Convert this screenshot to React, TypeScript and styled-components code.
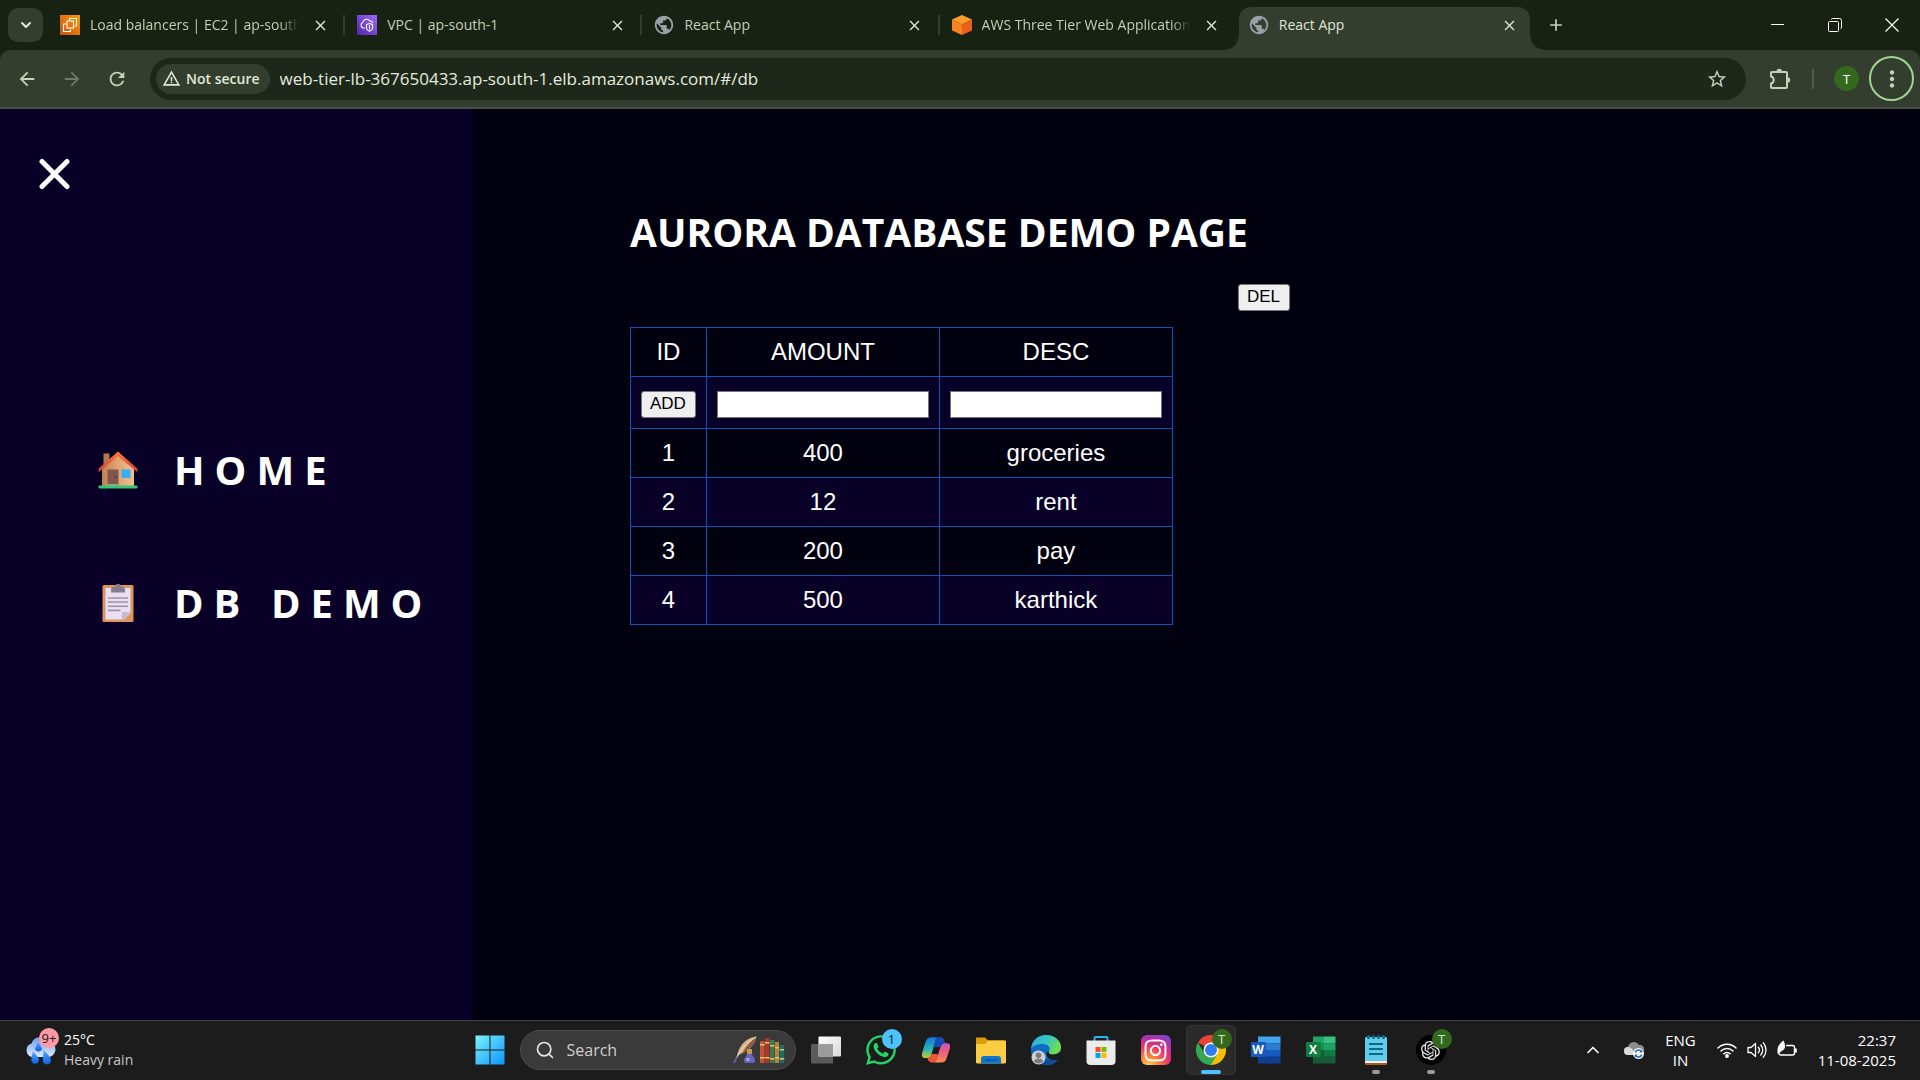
import React from "react";
import styled, { createGlobalStyle, css } from "styled-components";
import {
  MdAdd,
  MdArrowBack,
  MdArrowForward,
  MdClose,
  MdMoreVert,
  MdPublic,
  MdRefresh,
  MdStarBorder,
  MdWarningAmber,
} from "react-icons/md";
import { FaInstagram, FaWhatsapp } from "react-icons/fa";
import { RiOpenaiFill } from "react-icons/ri";
import { ChevronDown, ChevronUp, Search } from "lucide-react";

const uiFont = `"Segoe UI", "Open Sans", "Noto Sans", sans-serif`;
const tableFont = `Arial, "Liberation Sans", sans-serif`;

const c = {
  strip: "#182213",
  toolbar: "#333e2e",
  omnibox: "#1e281a",
  tabText: "#c2ceb8",
  activeText: "#dfe6d8",
  icon: "#c4d3b8",
  sidebar: "#080026",
  page: "#01010f",
  line: "#0a53b9",
  taskbar: "#1c1c1c",
};

const GlobalStyle = createGlobalStyle`
  *, *::before, *::after { box-sizing: border-box; }
  body { margin: 0; background: ${c.page}; font-family: ${uiFont}; }
  button, input { font: inherit; }
  svg { display: block; flex: none; }
`;

const Screen = styled.div`
  display: flex;
  flex-direction: column;
  min-height: 100vh;
`;

/* ---------- browser chrome ---------- */

const BrowserFrame = styled.header`
  background: ${c.strip};
`;

const TabStrip = styled.div`
  display: flex;
  align-items: stretch;
  height: 50px;
  padding-left: 8px;
`;

const PlainButton = styled.button`
  display: flex;
  align-items: center;
  justify-content: center;
  padding: 0;
  border: 0;
  background: none;
  color: ${c.icon};
`;

const TabSearch = styled(PlainButton)`
  width: 35px;
  height: 34px;
  margin: 8px 5px 0 0;
  border-radius: 10px;
  background: ${c.toolbar};
  color: #e4ebdd;
`;

const Tabs = styled.nav`
  display: flex;
  flex: 0 1 1488px;
  min-width: 0;
`;

const Tab = styled.div<{ $active?: boolean; $divider?: boolean }>`
  position: relative;
  display: flex;
  flex: 1 1 0;
  align-items: center;
  min-width: 0;
  padding: 0 14px 0 12px;
  color: ${(p) => (p.$active ? c.activeText : c.tabText)};

  ${(p) =>
    p.$divider &&
    css`
      &::after {
        content: "";
        position: absolute;
        top: 15px;
        right: 0;
        width: 2px;
        height: 20px;
        background: #333e2e;
      }
    `}

  ${(p) =>
    p.$active &&
    css`
      margin: 7px 6px 0 2px;
      padding: 0 10px 7px 10px;
      border-radius: 12px 12px 0 0;
      background: ${c.toolbar};

      &::before,
      &::after {
        content: "";
        position: absolute;
        bottom: 0;
        width: 14px;
        height: 14px;
      }
      &::before {
        left: -14px;
        background: radial-gradient(circle at 0 0, transparent 13px, ${c.toolbar} 14px);
      }
      &::after {
        right: -14px;
        background: radial-gradient(circle at 100% 0, transparent 13px, ${c.toolbar} 14px);
      }
    `}
`;

const TabTitle = styled.a<{ $fade?: boolean }>`
  flex: 1;
  min-width: 0;
  margin: 0 10px;
  overflow: hidden;
  color: inherit;
  font-size: 14px;
  line-height: 22px;
  text-decoration: none;
  white-space: nowrap;
  ${(p) => p.$fade && css`mask-image: linear-gradient(90deg, #000 calc(100% - 20px), transparent);`}
`;

const TabClose = styled(PlainButton)`
  width: 22px;
  height: 22px;
  color: #dde5d5;
`;

const NewTab = styled(PlainButton)`
  width: 40px;
`;

const WindowControls = styled.div`
  display: flex;
  margin-left: auto;
`;

const WindowButton = styled(PlainButton)`
  width: 57px;
  color: #ffffff;
`;

const Toolbar = styled.div`
  display: flex;
  align-items: center;
  height: 59px;
  padding: 0 6px 0 4px;
  border-bottom: 2px solid #454f41;
  border-radius: 10px 10px 0 0;
  background: ${c.toolbar};
`;

const ToolButton = styled(PlainButton)<{ $dim?: boolean }>`
  width: 45px;
  height: 40px;
  color: ${(p) => (p.$dim ? "#6f7b69" : c.icon)};
`;

const Omnibox = styled.div`
  display: flex;
  flex: 1;
  align-items: center;
  height: 42px;
  margin: 0 11px;
  padding: 0 18px 0 6px;
  border-radius: 21px;
  background: ${c.omnibox};
`;

const Chip = styled.button`
  display: flex;
  align-items: center;
  gap: 5px;
  height: 30px;
  padding: 0 10px 0 6px;
  border: 0;
  border-radius: 15px;
  background: ${c.toolbar};
  color: #e0e8d8;
  font-size: 14px;
  font-weight: 600;
  line-height: 20px;
  white-space: nowrap;
`;

const UrlInput = styled.input`
  flex: 1;
  min-width: 0;
  margin-left: 10px;
  padding: 0;
  border: 0;
  outline: 0;
  background: none;
  color: #e4ebde;
  font-size: 17px;
  line-height: 24px;
`;

const ToolbarEnd = styled.div`
  display: flex;
  align-items: center;
`;

const Divider = styled.span`
  width: 2px;
  height: 20px;
  margin: 0 20px 0 10px;
  background: #4c5b43;
`;

const Avatar = styled.button`
  width: 25px;
  height: 25px;
  padding: 0;
  border: 0;
  border-radius: 50%;
  background: #33691e;
  color: #ffffff;
  font-size: 13px;
  line-height: 24px;
`;

const MenuButton = styled(PlainButton)`
  width: 45px;
  height: 45px;
  margin-left: 10px;
  border: 2px solid #a2d68f;
  border-radius: 50%;
`;

/* ---------- page ---------- */

const Page = styled.main`
  display: flex;
  flex: 1;
  background: ${c.page};
`;

const Sidebar = styled.aside`
  flex: 0 0 472px;
  padding-top: 49px;
  background: ${c.sidebar};
`;

const CloseMenu = styled(PlainButton)`
  width: 32px;
  height: 32px;
  margin-left: 38px;
`;

const Menu = styled.nav`
  display: flex;
  flex-direction: column;
  gap: 79px;
  margin-top: 253px;
  padding-left: 98px;
`;

const MenuLink = styled.a`
  display: flex;
  align-items: center;
  gap: 36px;
  color: #ffffff;
  font-size: 40px;
  font-weight: 700;
  line-height: 54px;
  letter-spacing: 10px;
  text-decoration: none;
  white-space: nowrap;
`;

const Content = styled.section`
  display: flex;
  flex-direction: column;
  align-items: flex-start;
  padding: 96px 0 0 158px;
`;

const Heading = styled.h1`
  margin: 0;
  color: #ffffff;
  font-size: 39px;
  font-weight: 700;
  line-height: 54px;
  white-space: nowrap;
`;

const Actions = styled.div`
  display: flex;
  justify-content: flex-end;
  width: 660px;
  margin: 25px 0 16px;
`;

const FormButton = styled.button`
  height: 27px;
  padding: 0 9px 2px 8px;
  border: 1px solid #767676;
  border-radius: 3px;
  background: #efefef;
  color: #000000;
  font-family: ${tableFont};
  font-size: 17px;
  line-height: 20px;
`;

const Table = styled.table`
  border-collapse: collapse;
  color: #ffffff;
  font-family: ${tableFont};
  font-size: 24px;
  line-height: 28px;
  text-align: center;

  tr:nth-child(even) {
    background: ${c.sidebar};
  }
  th,
  td {
    padding: 10px;
    border: 1px solid ${c.line};
    font-weight: 400;
  }
`;

const EntryRow = styled.tr`
  && td {
    padding-top: 14px;
    line-height: 0;
  }
`;

const EntryInput = styled.input`
  width: 212px;
  height: 27px;
  padding: 1px 2px;
  border: 1px solid #767676;
  background: #ffffff;
  font-size: 17px;
`;

/* ---------- taskbar ---------- */

const Taskbar = styled.footer`
  display: flex;
  align-items: center;
  height: 60px;
  padding-bottom: 1px;
  border-top: 1px solid #434343;
  background: ${c.taskbar};
  color: #ffffff;
`;

const Side = styled.div<{ $end?: boolean }>`
  display: flex;
  flex: 1 1 0;
  align-items: center;
  justify-content: ${(p) => (p.$end ? "flex-end" : "flex-start")};
  padding: ${(p) => (p.$end ? "0 24px 0 0" : "0 0 0 24px")};
`;

const Weather = styled.button`
  display: flex;
  align-items: center;
  gap: 8px;
  padding: 0;
  border: 0;
  background: none;
  color: #ffffff;
  font-size: 14px;
  line-height: 20px;
  text-align: left;
`;

const WeatherIcon = styled.span`
  position: relative;
  width: 32px;
  height: 32px;
`;

const Badge = styled.span<{ $bg: string; $fg: string }>`
  position: absolute;
  top: -6px;
  right: -6px;
  width: 20px;
  height: 20px;
  border-radius: 50%;
  background: ${(p) => p.$bg};
  color: ${(p) => p.$fg};
  font-size: 13px;
  line-height: 20px;
  text-align: center;
`;

const WeatherBadge = styled(Badge)`
  right: -3px;
`;

const Muted = styled.span`
  color: #c8c8c8;
`;

const Stack = styled.span<{ $align?: string }>`
  display: flex;
  flex-direction: column;
  text-align: ${(p) => p.$align || "left"};
`;

const Dock = styled.div`
  display: flex;
  flex: none;
  align-items: center;
  gap: 5px;
`;

const Tile = styled.button<{ $on?: boolean }>`
  position: relative;
  display: flex;
  align-items: center;
  justify-content: center;
  width: 50px;
  height: 50px;
  padding: 0;
  border: 1px solid ${(p) => (p.$on ? "#353535" : "transparent")};
  border-radius: 5px;
  background: ${(p) => (p.$on ? "#2a2a2a" : "none")};
`;

const TileIcon = styled.span`
  position: relative;
  display: block;
  width: 30px;
  height: 30px;
`;

const Running = styled.span<{ $focus?: boolean }>`
  position: absolute;
  bottom: 0;
  width: ${(p) => (p.$focus ? 20 : 8)}px;
  height: 4px;
  border-radius: 2px;
  background: ${(p) => (p.$focus ? "#4cc2ff" : "#9a9a9a")};
`;

const SearchBox = styled.label`
  display: flex;
  align-items: center;
  width: 276px;
  height: 40px;
  padding: 0 10px 0 14px;
  border: 1px solid #4c4c4c;
  border-radius: 20px;
  background: #3a3a3a;
`;

const SearchInput = styled.input`
  flex: 1;
  min-width: 0;
  margin-left: 12px;
  padding: 0;
  border: 0;
  outline: 0;
  background: none;
  color: #cfcfcf;
  font-size: 16px;
  line-height: 22px;
  &::placeholder {
    color: #cfcfcf;
    opacity: 1;
  }
`;

const TrayButton = styled.button`
  display: flex;
  align-items: center;
  gap: 10px;
  padding: 0;
  border: 0;
  background: none;
  color: #ffffff;
  font-size: 15px;
  line-height: 20px;
  white-space: nowrap;
`;

const Tray = styled.div`
  display: flex;
  align-items: center;
  gap: 21px;
`;

/* ---------- drawings ---------- */

const Ec2Icon = () => (
  <svg width="20" height="20" viewBox="0 0 20 20">
    <defs>
      <linearGradient id="ec2" x1="0" y1="1" x2="1" y2="0">
        <stop offset="0" stopColor="#c8511b" />
        <stop offset="1" stopColor="#ff9900" />
      </linearGradient>
    </defs>
    <rect width="20" height="20" fill="url(#ec2)" />
    <g fill="none" stroke="#fff" strokeWidth="1.1" strokeLinejoin="round">
      <path d="M9.500 5.500V3.500h7V11h-2" />
      <rect x="7" y="6" width="6.500" height="7" />
      <path d="M6 9H3.500v7.500h7V14.500" />
    </g>
  </svg>
);

const VpcIcon = () => (
  <svg width="20" height="20" viewBox="0 0 20 20">
    <defs>
      <linearGradient id="vpc" x1="0" y1="1" x2="1" y2="0">
        <stop offset="0" stopColor="#4d27a8" />
        <stop offset="1" stopColor="#a166ff" />
      </linearGradient>
    </defs>
    <rect width="20" height="20" fill="url(#vpc)" />
    <g fill="none" stroke="#fff" strokeWidth="1.1">
      <path d="M8 13H6a3 3 0 0 1-.3-5.500A4 4 0 0 1 13 6.200a2.400 2.400 0 0 1 2.800 1.600" />
      <path d="M9.500 9.500 12.500 8.500l3 1v3.500c0 1.600-1.500 2.500-3 3.200-1.500-.7-3-1.600-3-3.200z" />
      <path d="M12.500 10v4.500" />
    </g>
  </svg>
);

const CubeIcon = () => (
  <svg width="20" height="20" viewBox="0 0 20 20">
    <path d="M10 0 20 4.500 10 9.500 0 4.500z" fill="#ff9d2e" />
    <path d="M0 4.500 10 9.500V20L0 15.500z" fill="#f58320" />
    <path d="M20 4.500 10 9.500V20l10-4.500z" fill="#ea5f1c" />
  </svg>
);

const PuzzleIcon = () => (
  <svg width="24" height="24" viewBox="0 0 24 24">
    <path
      d="M4 5h14a1 1 0 0 1 1 1v14a1 1 0 0 1-1 1H4a1 1 0 0 1-1-1v-3.500c1.600-.3 2.700-1.600 2.700-3.500S4.600 9.800 3 9.500V6a1 1 0 0 1 1-1z"
      fill="none"
      stroke="currentColor"
      strokeWidth="2"
      strokeLinejoin="round"
    />
    <path d="M8.500 4.500a2.700 2.700 0 0 1 5.400 0zM19.500 10.300a2.700 2.700 0 0 1 0 5.400z" fill="currentColor" />
  </svg>
);

const HouseIcon = () => (
  <svg width="40" height="40" viewBox="0 0 40 40">
    <defs>
      <linearGradient id="wall" x1="0" x2="1">
        <stop offset="0" stopColor="#b9834f" />
        <stop offset=".5" stopColor="#e0a574" />
        <stop offset="1" stopColor="#ecc08e" />
      </linearGradient>
      <linearGradient id="roof" x1="0" y1="1" x2="0" y2="0">
        <stop offset="0" stopColor="#d83a35" />
        <stop offset="1" stopColor="#ff7a3c" />
      </linearGradient>
    </defs>
    <path d="M5.500 3.500h6V14h-6z" fill="#b07a48" />
    <path d="M4 18 20 4l16 14v18H4z" fill="url(#wall)" />
    <path d="m20 1.500 19.500 17.200v3.600L20 6.200.5 22.300v-3.600z" fill="url(#roof)" />
    <path d="M9.500 20.500a1 1 0 0 1 1-1h9a1 1 0 0 1 1 1V36h-11z" fill="#83554f" />
    <circle cx="17.600" cy="27" r=".9" fill="#5b3633" />
    <rect x="23.500" y="19.500" width="9" height="8.500" rx=".8" fill="#35aef5" />
    <rect x="8.500" y="34" width="13" height="2" fill="#a3a08f" />
    <rect x=".5" y="35.500" width="39" height="3" rx="1" fill="#35c973" />
  </svg>
);

const ClipboardIcon = () => (
  <svg width="40" height="40" viewBox="0 0 40 40">
    <rect x="4.500" y="2" width="31" height="37" rx="1.500" fill="#dc9560" />
    <path d="M7.500 5h25v25l-6.500 6.500H7.500z" fill="#e8e0f2" />
    <path d="M32.500 29H24v7.500h1.500z" fill="#c3b8d4" />
    <path d="M13 9.500V6.500c0-2 2-3 4.500-3.200C17.800 1.500 18.700.8 20 .8s2.200.7 2.500 2.500C25 3.500 27 4.500 27 6.500v3z" fill="#857e8c" />
    <g stroke="#9b93a6" strokeWidth="1.600">
      <path d="M10 15h20M10 19h20M10 23.200h20M10 27.400h12.500" />
    </g>
  </svg>
);

const CrossIcon = () => (
  <svg width="32" height="32" viewBox="0 0 32 32" stroke="#fff" strokeWidth="5" strokeLinecap="round">
    <path d="M4 3.500l25 25M29 3.500l-25 25" />
  </svg>
);

const RainIcon = () => (
  <svg width="32" height="32" viewBox="0 0 32 32">
    <defs>
      <linearGradient id="cloud" x1="0" y1="0" x2="0" y2="1">
        <stop offset="0" stopColor="#6f9df0" />
        <stop offset="1" stopColor="#dfe9fb" />
      </linearGradient>
      <linearGradient id="drop" x1="0" y1="0" x2="0" y2="1">
        <stop offset="0" stopColor="#56a8ff" />
        <stop offset="1" stopColor="#0a5fe8" />
      </linearGradient>
    </defs>
    <path d="M8 23a7 7 0 0 1-.5-13.500A9 9 0 0 1 24 8a7.500 7.500 0 0 1 0 15z" fill="url(#cloud)" />
    <g fill="url(#drop)">
      <path d="M14 8c2 3 4 5 4 7.500a4 4 0 0 1-7 0C11 13 13 11 14 8z" />
      <path d="M9 17.500c3 3.500 6 5.500 6 9a4 4 0 0 1-7.500 1C7 24 8 21 9 17.500z" />
      <path d="M20 16.500c3.500 3.500 7 6.500 7 10a4.200 4.200 0 0 1-8 1.500c-.5-4 0-8 1-11.500z" />
    </g>
  </svg>
);

const WindowsIcon = () => (
  <svg width="30" height="30" viewBox="0 0 30 30">
    <defs>
      <linearGradient id="win" x1="0" y1="0" x2="30" y2="30" gradientUnits="userSpaceOnUse">
        <stop offset="0" stopColor="#7df3fc" />
        <stop offset="1" stopColor="#0a94fb" />
      </linearGradient>
    </defs>
    <path d="M.5.5h14v14H.5zM15.500.5h14v14h-14zM.5 15.500h14v14H.5zM15.500 15.500h14v14h-14z" fill="url(#win)" />
  </svg>
);

const QuillBooks = () => (
  <svg width="52" height="30" viewBox="0 0 52 30">
    <path d="M4 22C5 13 11 3 23.500 1.500 22 10 14 17 7 19z" fill="#d9b18c" />
    <path d="M9 19c6-3 12-9 14.500-17.500C18 6 12 12 9 19z" fill="#8a5c42" />
    <path d="M3 24C7 15 14 7 23 2" fill="none" stroke="#f3e2cc" strokeWidth="1" />
    <path d="m1 28 3-6" stroke="#5d6bd0" strokeWidth="1.600" />
    <rect x="14" y="14" width="5" height="5" fill="#c79556" />
    <path d="M13.500 19h6v2c2 1 2.500 3 2.500 5a2 2 0 0 1-2 2h-7a2 2 0 0 1-2-2c0-2 .5-4 2.500-5z" fill="#6666b8" />
    <path d="M13.500 23h3v3h-3z" fill="#a9a9ea" />
    <rect x="27" y="6" width="4.500" height="22" fill="#c4532f" />
    <rect x="32" y="3" width="4.500" height="25" fill="#a8372e" />
    <rect x="37" y="5" width="4.500" height="23" fill="#3c7a4e" />
    <rect x="42" y="7" width="4" height="21" fill="#b5823b" />
    <rect x="46.600" y="10" width="4.500" height="18" fill="#197066" />
    <g fill="#e9c268">
      <path d="M27 9h4.500v1.500H27zM27 22h4.500v1.500H27zM32 7h4.500v1.500H32zM32 22h4.500v1.500H32zM37 10h4.500v1.500H37zM37 23h4.500v1.500H37zM42 12h4v1.500h-4zM42 22h4v1.500h-4zM46.600 14h4.500v1.500h-4.500zM46.600 23h4.500v1.500h-4.500z" />
    </g>
  </svg>
);

const TaskViewIcon = () => (
  <svg width="30" height="30" viewBox="0 0 30 30">
    <defs>
      <linearGradient id="tv" x1="0" y1="0" x2="1" y2="1">
        <stop offset="0" stopColor="#fff" />
        <stop offset="1" stopColor="#d8d8d8" />
      </linearGradient>
    </defs>
    <rect y="9" width="22" height="19.500" rx="1" fill="#5b5b5b" />
    <rect x="7.500" y="1.500" width="22.500" height="20" rx="1" fill="url(#tv)" />
    <path d="M7.500 9H22v12.500H7.500z" fill="#9c9c9c" />
  </svg>
);

const CopilotIcon = () => (
  <svg width="30" height="30" viewBox="0 0 30 30">
    <defs>
      <linearGradient id="cpa" x1="0" y1="0" x2="0" y2="1">
        <stop offset="0" stopColor="#0c77e0" />
        <stop offset=".5" stopColor="#2fb6b0" />
        <stop offset=".8" stopColor="#b9c93b" />
        <stop offset="1" stopColor="#f7b70c" />
      </linearGradient>
      <linearGradient id="cpb" x1="0" y1="0" x2="0" y2="1">
        <stop offset="0" stopColor="#a55cf0" />
        <stop offset=".5" stopColor="#e8568f" />
        <stop offset="1" stopColor="#ff8b4b" />
      </linearGradient>
    </defs>
    <path d="M11 27c-2.500 0-3.500-1.500-4.200-4H3.500C1 23 .5 20 1.200 17.500L4.500 7C5.500 3.800 7.500 2.200 10 2.200h9c-3 0-4 2-5 5L10.500 19c-.7 2.500-2 4-4 4" fill="url(#cpa)" />
    <path d="M19 2.200c2.500 0 3.500 1.500 4.200 4l.6 2h2.700c2.500 0 3 3 2.300 5.500l-3.300 9.800c-1 3-3 4-5.500 4h-9c3 0 4-2 5-5L19.500 12c.7-2.500 2-3.800 4-3.800" fill="url(#cpb)" />
    <path d="M14.500 2.200H19c2.500 0 3.500 1.500 4.200 4l.6 2c-2.500 0-3.700 1-4.300 3.800H12.800L14 7.200c1-3 .8-4 .5-5z" fill="#1648b8" />
    <path d="M6.500 23c2 0 3.300-1.500 4-4h6.200l-.7 3.500c-1 3-2 5-5 5-2.500 0-3.800-2-4.500-4.500z" fill="#f2553a" />
  </svg>
);

const FolderIcon = () => (
  <svg width="30" height="30" viewBox="0 0 30 30">
    <path d="M0 3.500a1 1 0 0 1 1-1h8l3 3h16a2 2 0 0 1 2 2V14H0z" fill="#dd9d08" />
    <path d="M0 9h9l3-3.500h17a1 1 0 0 1 1 1V27a1.500 1.500 0 0 1-1.500 1.500h-27A1.500 1.500 0 0 1 0 27z" fill="#fccd43" />
    <path d="M5 28.500V24a3 3 0 0 1 3-3h14a3 3 0 0 1 3 3v4.500z" fill="#0f76cd" />
    <path d="M9 25h12" stroke="#0a4a8c" strokeWidth="1.200" />
  </svg>
);

const EdgeIcon = () => (
  <svg width="30" height="30" viewBox="0 0 30 30">
    <defs>
      <linearGradient id="ed" x1="0" y1="0" x2="1" y2=".5">
        <stop offset="0" stopColor="#2aa7dd" />
        <stop offset=".55" stopColor="#36c6c0" />
        <stop offset="1" stopColor="#6fe04b" />
      </linearGradient>
    </defs>
    <circle cx="15" cy="15" r="15" fill="#0f6cc4" />
    <path d="M0 14C1 5 7 0 15 0c9 0 15 6 15 12 0 5-4 7.500-8 7.500-3 0-5-1-4-3 2-4-1-7.500-6-7.500C6 9 1 11 0 14z" fill="url(#ed)" />
    <path d="M12 15c-2 8 5 12 15.500 9.500C24 29 19 31 13 30 7 27 7 17 12 15z" fill="#0b4da0" />
    <path d="M18 16.500c-1 2 1 3 4 3 3 0 6-1 7.500-3.500 1 3 0 6-2 8.500-7 2-13-1-12-7.500z" fill="#1c1c1c" />
    <circle cx="7.500" cy="22.500" r="7" fill="#cfcfcf" />
    <circle cx="7.500" cy="20.300" r="2.800" fill="#7c7c7c" />
    <path d="M3 26.500c0-4 9-4 9 0-2 2.500-7 2.500-9 0z" fill="#7c7c7c" />
  </svg>
);

const StoreIcon = () => (
  <svg width="30" height="30" viewBox="0 0 30 30">
    <path d="M8.500 6V3a1 1 0 0 1 1-1h11a1 1 0 0 1 1 1v3" fill="none" stroke="#2ab4ea" strokeWidth="2" />
    <path d="M.5 5.500h29V26a4 4 0 0 1-4 4h-21a4 4 0 0 1-4-4z" fill="#ebebeb" />
    <path d="M9.500 12h5v5h-5z" fill="#f25022" />
    <path d="M15.500 12h5v5h-5z" fill="#7fba00" />
    <path d="M9.500 18h5v5h-5z" fill="#00a4ef" />
    <path d="M15.500 18h5v5h-5z" fill="#ffb900" />
  </svg>
);

const InstaTile = styled.span`
  display: flex;
  align-items: center;
  justify-content: center;
  width: 30px;
  height: 30px;
  border-radius: 6px;
  background: radial-gradient(circle at 25% 105%, #ffd35a 0, #fb8a3a 25%, #e8306e 55%, #b42fae 75%, #5a55d6 100%);
  color: #ffffff;
`;

const WhatsAppTile = styled.span`
  display: flex;
  align-items: center;
  justify-content: center;
  width: 30px;
  height: 30px;
  color: #25d366;
`;

const ChromeIcon = () => (
  <svg width="30" height="30" viewBox="0 0 30 30">
    <path d="M15 15 2 7.500A15 15 0 0 1 28 7.500H15z" fill="#ea4335" />
    <path d="M15 15 15 7.500h13A15 15 0 0 1 15 30z" fill="#fbbc05" />
    <path d="M15 15 21.500 18.800 15 30A15 15 0 0 1 2 7.500l6.500 11.200z" fill="#34a853" />
    <circle cx="15" cy="15" r="7.500" fill="#fff" />
    <circle cx="15" cy="15" r="6" fill="#2f7df0" />
  </svg>
);

const Letter = styled.span<{ $bg: string }>`
  position: absolute;
  top: 7px;
  left: 0;
  width: 15px;
  height: 15px;
  border-radius: 1px;
  background: ${(p) => p.$bg};
  color: #ffffff;
  font-size: 12px;
  font-weight: 700;
  line-height: 15px;
  text-align: center;
`;

const OfficeSheet = ({ shades }: { shades: string[] }) => (
  <svg width="30" height="30" viewBox="0 0 30 30">
    {shades.map((s, i) => (
      <rect key={s} x="7" y={1.5 + i * 6.75} width="22.500" height="6.800" fill={s} />
    ))}
  </svg>
);

const ExcelSheet = () => (
  <svg width="30" height="30" viewBox="0 0 30 30">
    <path d="M7 1.500h11v9H7z" fill="#21a366" />
    <path d="M18 1.500h11.500v6.800H18z" fill="#33c481" />
    <path d="M18 8.300h11.500v6.800H18z" fill="#21a366" />
    <path d="M7 8.300h11v6.800H7z" fill="#149052" />
    <path d="M7 15h11v13.500H7z" fill="#185c37" />
    <path d="M18 15h11.500v6.800H18z" fill="#107c41" />
    <path d="M18 21.800h11.500v6.700H18z" fill="#185c37" />
  </svg>
);

const NotepadIcon = () => (
  <svg width="30" height="30" viewBox="0 0 30 30">
    <rect x="4" y="23" width="22" height="7" rx="1" fill="#b25a14" />
    <rect x="4" y="20" width="22" height="8" fill="#f0efec" />
    <rect x="4" y="2" width="22" height="24" rx="1" fill="#62cbea" />
    <g fill="#0e6f95">
      <rect x="6" y="0" width="3" height="4" rx="1.500" />
      <rect x="11" y="0" width="3" height="4" rx="1.500" />
      <rect x="16" y="0" width="3" height="4" rx="1.500" />
      <rect x="21" y="0" width="3" height="4" rx="1.500" />
    </g>
    <path d="M8 9h14M8 14h14M8 19h14" stroke="#0b6a90" strokeWidth="1.800" />
  </svg>
);

const GptTile = styled.span`
  display: flex;
  align-items: center;
  justify-content: center;
  width: 30px;
  height: 30px;
  border-radius: 50%;
  background: #000000;
  color: #e8e8e8;
`;

const CloudSync = () => (
  <svg width="20" height="20" viewBox="0 0 20 20">
    <path d="M4 15a4 4 0 0 1 0-8A6 6 0 0 1 15 5a4 4 0 0 1 2 8z" fill="#8d8d8d" />
    <path d="M4 15a4 4 0 0 1 0-8c3 0 5 2 7 8z" fill="#d9d9d9" />
    <circle cx="14.500" cy="13.500" r="5.500" fill="#fff" />
    <path d="M11.200 12.500a3.500 3.500 0 0 1 6.300-1M17.800 14.500a3.500 3.500 0 0 1-6.300 1" fill="none" stroke="#1769c2" strokeWidth="1.500" />
    <path d="M18.300 9.500v3h-3zM10.700 17.500v-3h3z" fill="#1769c2" />
  </svg>
);

const WifiIcon = () => (
  <svg width="20" height="20" viewBox="0 0 20 20" fill="none" stroke="#fff" strokeWidth="1.500" strokeLinecap="round">
    <path d="M1 8a12.500 12.500 0 0 1 18 0M4 11a8.300 8.300 0 0 1 12 0M6.800 13.800a4.500 4.500 0 0 1 6.400 0" />
    <circle cx="10" cy="16" r="1.200" fill="#fff" />
  </svg>
);

const SpeakerIcon = () => (
  <svg width="20" height="20" viewBox="0 0 20 20" fill="none" stroke="#fff" strokeWidth="1.300" strokeLinejoin="round" strokeLinecap="round">
    <path d="M1 7.500h3L8.500 3.500v13L4 12.500H1z" />
    <path d="M11.300 7.300a4 4 0 0 1 0 5.400M13.800 5a7.500 7.500 0 0 1 0 10M16.300 2.800a11 11 0 0 1 0 14.400" />
  </svg>
);

const BatteryIcon = () => (
  <svg width="20" height="20" viewBox="0 0 20 20">
    <path d="M9 5.500h6.500a2 2 0 0 1 2 2v5.500a2 2 0 0 1-2 2H4a2 2 0 0 1-2-1.500" fill="none" stroke="#fff" strokeWidth="1.400" />
    <path d="M18 8.500h1.800v4H18z" fill="#fff" />
    <path d="M.5 12.500C0 7 2 4 6.500.5 9 6 8.500 9.500 4.500 11L1 14.500z" fill="#fff" />
  </svg>
);

const MinimizeIcon = () => (
  <svg width="13" height="13" viewBox="0 0 13 13" stroke="#fff">
    <path d="M0 5.500h13" />
  </svg>
);

const RestoreIcon = () => (
  <svg width="14" height="14" viewBox="0 0 14 14" fill="none" stroke="#fff">
    <rect x=".5" y="3.500" width="10" height="10" rx="1" />
    <path d="M3.500 1.500a1 1 0 0 1 1-1h7a2 2 0 0 1 2 2v7a1 1 0 0 1-1 1" />
  </svg>
);

const CloseWindowIcon = () => (
  <svg width="14" height="14" viewBox="0 0 14 14" stroke="#fff" strokeWidth="1.200">
    <path d="M.5.5l13 13M13.500.5l-13 13" />
  </svg>
);

/* ---------- data ---------- */

const tabs = [
  { title: "Load balancers | EC2 | ap-south-1", icon: <Ec2Icon />, fade: true, divider: true },
  { title: "VPC | ap-south-1", icon: <VpcIcon />, divider: true },
  { title: "React App", icon: <MdPublic size={22} color="#9aa0a6" />, divider: true },
  { title: "AWS Three Tier Web Application", icon: <CubeIcon />, fade: true },
  { title: "React App", icon: <MdPublic size={22} color="#9aa0a6" />, active: true },
];

const Favicon = styled.span`
  display: flex;
  align-items: center;
  justify-content: center;
  width: 20px;
  height: 20px;
`;

const rows = [
  [1, 400, "groceries"],
  [2, 12, "rent"],
  [3, 200, "pay"],
  [4, 500, "karthick"],
];

type DockApp = {
  name: string;
  icon: React.ReactNode;
  badge?: [string, string, string];
  running?: boolean;
  on?: boolean;
};

const apps: DockApp[] = [
  { name: "Task view", icon: <TaskViewIcon /> },
  { name: "WhatsApp", icon: <WhatsAppTile><FaWhatsapp size={34} /></WhatsAppTile>, badge: ["1", "#4cc2ff", "#10202c"] },
  { name: "Copilot", icon: <CopilotIcon /> },
  { name: "File Explorer", icon: <FolderIcon /> },
  { name: "Edge", icon: <EdgeIcon /> },
  { name: "Store", icon: <StoreIcon /> },
  { name: "Instagram", icon: <InstaTile><FaInstagram size={25} /></InstaTile> },
  { name: "Chrome", icon: <ChromeIcon />, badge: ["T", "#33691e", "#cfe3c4"], running: true, on: true },
  {
    name: "Word",
    icon: (
      <>
        <OfficeSheet shades={["#41a5ee", "#2b7cd3", "#185abd", "#103f91"]} />
        <Letter $bg="#185abd">W</Letter>
      </>
    ),
  },
  {
    name: "Excel",
    icon: (
      <>
        <ExcelSheet />
        <Letter $bg="#107c41">X</Letter>
      </>
    ),
  },
  { name: "Notepad", icon: <NotepadIcon />, running: true },
  { name: "ChatGPT", icon: <GptTile><RiOpenaiFill size={23} /></GptTile>, badge: ["T", "#33691e", "#cfe3c4"], running: true },
];

export default function App() {
  return (
    <Screen>
      <GlobalStyle />
      <BrowserFrame>
        <TabStrip>
          <TabSearch aria-label="Search tabs">
            <ChevronDown size={16} strokeWidth={3} />
          </TabSearch>
          <Tabs aria-label="Tabs">
            {tabs.map((t, i) => (
              <Tab key={i} $active={t.active} $divider={t.divider}>
                <Favicon>{t.icon}</Favicon>
                <TabTitle href="#" $fade={t.fade}>{t.title}</TabTitle>
                <TabClose aria-label="Close tab">
                  <MdClose size={17} />
                </TabClose>
              </Tab>
            ))}
          </Tabs>
          <NewTab aria-label="New tab">
            <MdAdd size={20} />
          </NewTab>
          <WindowControls>
            <WindowButton aria-label="Minimize"><MinimizeIcon /></WindowButton>
            <WindowButton aria-label="Restore"><RestoreIcon /></WindowButton>
            <WindowButton aria-label="Close window"><CloseWindowIcon /></WindowButton>
          </WindowControls>
        </TabStrip>

        <Toolbar>
          <ToolButton aria-label="Back"><MdArrowBack size={22} /></ToolButton>
          <ToolButton aria-label="Forward" $dim><MdArrowForward size={22} /></ToolButton>
          <ToolButton aria-label="Reload"><MdRefresh size={22} /></ToolButton>
          <Omnibox>
            <Chip>
              <MdWarningAmber size={19} />
              Not secure
            </Chip>
            <UrlInput aria-label="Address" defaultValue="web-tier-lb-367650433.ap-south-1.elb.amazonaws.com/#/db" />
            <PlainButton aria-label="Bookmark"><MdStarBorder size={22} /></PlainButton>
          </Omnibox>
          <ToolbarEnd>
            <ToolButton aria-label="Extensions"><PuzzleIcon /></ToolButton>
            <Divider />
            <Avatar aria-label="Profile">T</Avatar>
            <MenuButton aria-label="Menu"><MdMoreVert size={26} /></MenuButton>
          </ToolbarEnd>
        </Toolbar>
      </BrowserFrame>

      <Page>
        <Sidebar>
          <CloseMenu aria-label="Close menu"><CrossIcon /></CloseMenu>
          <Menu>
            <MenuLink href="#/"><HouseIcon />HOME</MenuLink>
            <MenuLink href="#/db"><ClipboardIcon />DB DEMO</MenuLink>
          </Menu>
        </Sidebar>
        <Content>
          <Heading>AURORA DATABASE DEMO PAGE</Heading>
          <Actions>
            <FormButton>DEL</FormButton>
          </Actions>
          <Table>
            <tbody>
              <tr>
                <th scope="col">ID</th>
                <th scope="col">AMOUNT</th>
                <th scope="col">DESC</th>
              </tr>
              <EntryRow>
                <td><FormButton>ADD</FormButton></td>
                <td><EntryInput aria-label="Amount" /></td>
                <td><EntryInput aria-label="Description" /></td>
              </EntryRow>
              {rows.map(([id, amount, desc]) => (
                <tr key={id}>
                  <td>{id}</td>
                  <td>{amount}</td>
                  <td>{desc}</td>
                </tr>
              ))}
            </tbody>
          </Table>
        </Content>
      </Page>

      <Taskbar>
        <Side>
          <Weather>
            <WeatherIcon>
              <RainIcon />
              <WeatherBadge $bg="#ff99a4" $fg="#1a1a1a">9+</WeatherBadge>
            </WeatherIcon>
            <Stack>
              <span>25°C</span>
              <Muted>Heavy rain</Muted>
            </Stack>
          </Weather>
        </Side>
        <Dock>
          <Tile aria-label="Start"><WindowsIcon /></Tile>
          <SearchBox>
            <Search size={20} color="#e6e6e6" strokeWidth={2} />
            <SearchInput placeholder="Search" aria-label="Search" />
            <QuillBooks />
          </SearchBox>
          {apps.map((a) => (
            <Tile key={a.name} aria-label={a.name} $on={a.on}>
              <TileIcon>
                {a.icon}
                {a.badge && <Badge $bg={a.badge[1]} $fg={a.badge[2]}>{a.badge[0]}</Badge>}
              </TileIcon>
              {a.running && <Running $focus={a.on} />}
            </Tile>
          ))}
        </Dock>
        <Side $end>
          <Tray>
            <TrayButton aria-label="Hidden icons"><ChevronUp size={20} strokeWidth={2} /></TrayButton>
            <TrayButton aria-label="OneDrive"><CloudSync /></TrayButton>
            <TrayButton>
              <Stack $align="center"><span>ENG</span><span>IN</span></Stack>
            </TrayButton>
            <TrayButton aria-label="Network, sound and battery">
              <WifiIcon />
              <SpeakerIcon />
              <BatteryIcon />
            </TrayButton>
            <TrayButton>
              <Stack $align="right"><span>22:37</span><span>11-08-2025</span></Stack>
            </TrayButton>
          </Tray>
        </Side>
      </Taskbar>
    </Screen>
  );
}
